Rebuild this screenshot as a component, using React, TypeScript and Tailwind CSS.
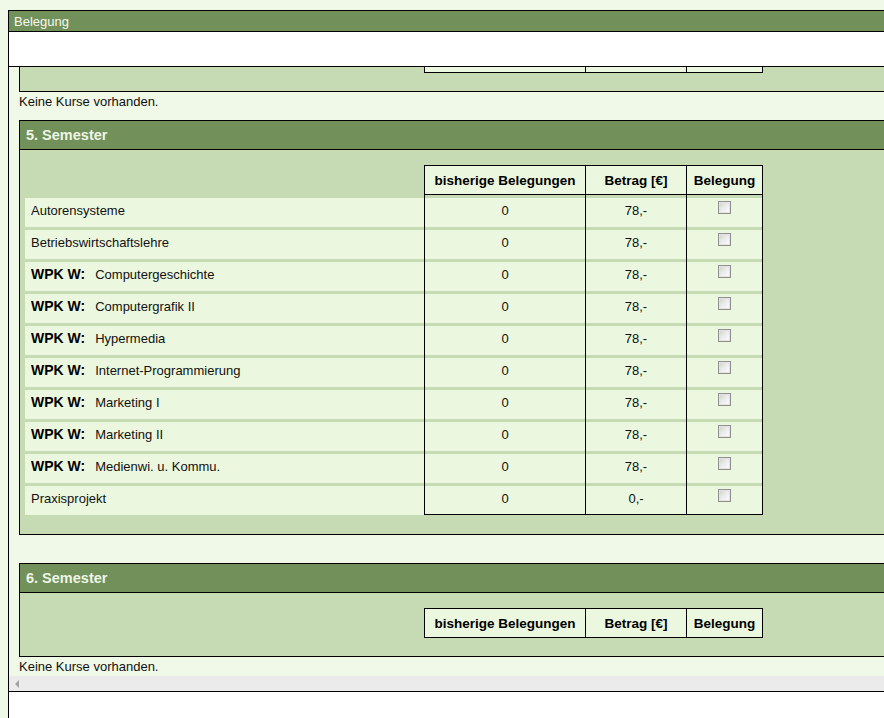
import React from 'react';

type Course = {
    wpk: boolean;
    name: string;
    count: string;
    price: string;
};

const courses: Course[] = [
    { wpk: false, name: 'Autorensysteme', count: '0', price: '78,-' },
    { wpk: false, name: 'Betriebswirtschaftslehre', count: '0', price: '78,-' },
    { wpk: true, name: 'Computergeschichte', count: '0', price: '78,-' },
    { wpk: true, name: 'Computergrafik II', count: '0', price: '78,-' },
    { wpk: true, name: 'Hypermedia', count: '0', price: '78,-' },
    { wpk: true, name: 'Internet-Programmierung', count: '0', price: '78,-' },
    { wpk: true, name: 'Marketing I', count: '0', price: '78,-' },
    { wpk: true, name: 'Marketing II', count: '0', price: '78,-' },
    { wpk: true, name: 'Medienwi. u. Kommu.', count: '0', price: '78,-' },
    { wpk: false, name: 'Praxisprojekt', count: '0', price: '0,-' }
];

const FakeCheckbox = () => (
    <span className="mt-[3px] block w-[13px] h-[13px] border border-[#8f8f8f] bg-linear-to-br from-[#cfcfcf] via-[#ececec] to-[#fdfdfd] shadow-[inset_0_0_0_1px_#e4e4e4]" />
);

const TableHead = () => (
    <div className="flex">
        <div className="w-[399px] h-[30px]" />
        <div className="flex h-[30px] border-y border-black bg-[#ebf7df] text-[13.5px] font-bold text-black">
            <div className="w-[161px] border-l border-black flex items-center justify-center pt-[2px]">bisherige Belegungen</div>
            <div className="w-[101px] border-l border-black flex items-center justify-center pt-[2px]">Betrag [€]</div>
            <div className="w-[77px] border-x border-black flex items-center justify-center pt-[2px]">Belegung</div>
        </div>
    </div>
);

const CourseRow = ({ course, last }: { course: Course; last: boolean }) => {
    const cellBase = `flex flex-col ${last ? 'border-b border-black' : ''}`;
    return (
        <div className="flex text-[13px] text-[#111]">
            <div className="w-[399px] flex flex-col">
                <div className="h-[3px] bg-[#c6dbb4]" />
                <div className="h-[29px] bg-[#ebf7df] px-[6px] pt-[3px] leading-[19px] whitespace-nowrap">
                    {course.wpk && <span className="font-bold text-[14px] text-black mr-[10px]">WPK W:</span>}
                    {course.name}
                </div>
            </div>
            <div className={`w-[161px] border-l border-black ${cellBase}`}>
                <div className="h-[3px] bg-[#c6dbb4]" />
                <div className="flex-1 bg-[#ebf7df] pt-[3px] leading-[19px] text-center">{course.count}</div>
            </div>
            <div className={`w-[101px] border-l border-black ${cellBase}`}>
                <div className="h-[3px] bg-[#c6dbb4]" />
                <div className="flex-1 bg-[#ebf7df] pt-[3px] leading-[19px] text-center">{course.price}</div>
            </div>
            <div className={`w-[77px] border-x border-black ${cellBase}`}>
                <div className="h-[3px] bg-[#c6dbb4]" />
                <div className="flex-1 bg-[#ebf7df] flex justify-center">
                    <FakeCheckbox />
                </div>
            </div>
        </div>
    );
};

const SemesterPanel = ({ title, items }: { title: string; items: Course[] }) => (
    <div className="w-[980px] border border-black bg-[#c6dbb4]">
        <div className="h-[29px] bg-[#72905a] border-b border-black px-[6px] pt-[2px] flex items-center text-[14.5px] font-bold text-[#eef5e4]">
            {title}
        </div>
        <div className={`pl-[5px] pt-[15px] ${items.length ? 'pb-[19px]' : 'pb-[18px]'}`}>
            <TableHead />
            {items.map((c, i) => (
                <CourseRow key={c.name} course={c} last={i === items.length - 1} />
            ))}
        </div>
    </div>
);

export default function App() {
    return (
        <div
            className="w-[884px] h-[718px] overflow-hidden bg-[#f0f8e8] pt-[10px] pl-[8px]"
            style={{ fontFamily: 'Arial, "Liberation Sans", sans-serif' }}
        >
            <div className="w-[1000px] h-[720px] border-l border-t border-black flex flex-col">
                <div className="h-[21px] bg-[#72905a] border-b border-black px-[5px] pt-[1px] flex items-center text-[13px] text-[#f6f9ee]">
                    Belegung
                </div>
                <div className="h-[35px] bg-white border-b border-black" />

                <div className="h-[609px] overflow-hidden bg-[#f0f8e8] pl-[10px] text-[13px] text-[#111]">
                    {/* bottom of 4. Semester, scrolled up */}
                    <div className="w-[980px] h-[25px] border-x border-b border-black bg-[#c6dbb4] pl-[5px]">
                        <div className="flex">
                            <div className="w-[399px]" />
                            <div className="flex h-[6px] border-b border-black bg-[#ebf7df]">
                                <div className="w-[161px] border-l border-black" />
                                <div className="w-[101px] border-l border-black" />
                                <div className="w-[77px] border-x border-black" />
                            </div>
                        </div>
                    </div>
                    <div className="h-[19px] leading-[19px] mb-[9px]">Keine Kurse vorhanden.</div>

                    <SemesterPanel title="5. Semester" items={courses} />
                    <div className="h-[19px] mb-[9px]" />

                    <SemesterPanel title="6. Semester" items={[]} />
                    <div className="h-[19px] leading-[19px]">Keine Kurse vorhanden.</div>
                </div>

                <div className="h-[15px] bg-[#ebebeb] flex items-center pl-[5px]">
                    <svg width="6" height="8" viewBox="0 0 6 8">
                        <path d="M5 0 L1 4 L5 8 Z" fill="#a3a3a3" />
                    </svg>
                </div>
                <div className="flex-1 bg-white border-t border-black" />
            </div>
        </div>
    );
}
